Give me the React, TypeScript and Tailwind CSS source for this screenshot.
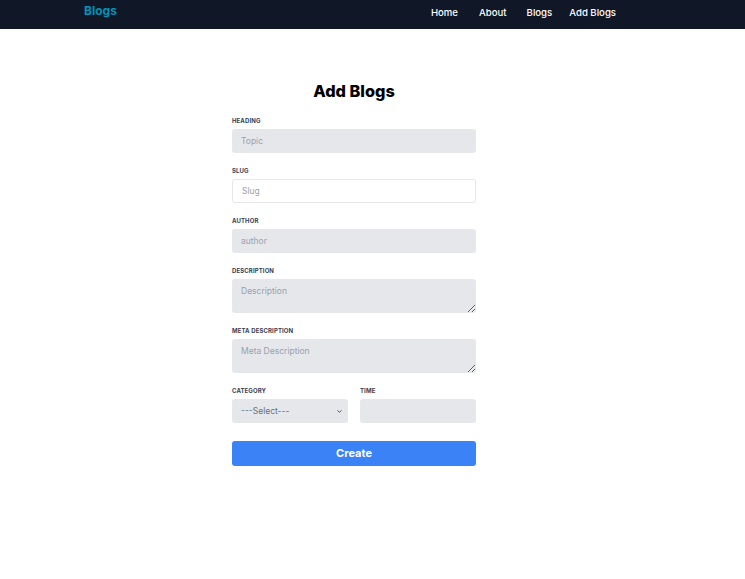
import { ChevronDown } from 'lucide-react'

const navLinks = [
  { label: 'Home', cls: 'ml-0' },
  { label: 'About', cls: 'ml-[21px]' },
  { label: 'Blogs', cls: 'ml-[20px]' },
  { label: 'Add Blogs', cls: 'ml-[17px]' },
]

const Label = ({ children }: { children: string }) => (
  <label className="block pt-[1px] text-[6px] leading-[8px] font-bold uppercase tracking-[0.02em] text-gray-700 mb-[4px]">
    {children}
  </label>
)

const inputCls =
  'block w-full h-[24px] rounded-[3px] bg-gray-200 px-[9px] text-[8.5px] text-gray-700 placeholder:text-gray-400 outline-none'

export default function App() {
  return (
    <div className="min-h-screen bg-white" style={{ fontFamily: 'Inter, "Noto Sans", sans-serif' }}>
      <header className="h-[29px] bg-gray-900">
        <div className="flex w-full items-start pl-[84px] pr-[129px]">
          <a className="mt-[4.5px] text-[12px] font-bold text-cyan-600 leading-none">Blogs</a>
          <nav className="ml-auto mt-[7.5px] flex items-center text-[9.6px] font-medium text-white leading-none">
            {navLinks.map((l) => (
              <a key={l.label} className={l.cls}>
                {l.label}
              </a>
            ))}
          </nav>
        </div>
      </header>

      <main className="w-[244px] ml-[232px] pt-[51px]">
        <h1 className="text-center text-[16.3px] font-extrabold text-black leading-[22px] mb-[14px]">Add Blogs</h1>

        <div className="mb-[13px]">
          <Label>Heading</Label>
          <input className={inputCls} placeholder="Topic" />
        </div>

        <div className="mb-[13px]">
          <Label>Slug</Label>
          <input
            className="block w-full h-[24px] rounded-[3px] bg-white border border-gray-200 px-[9px] text-[8.5px] text-gray-700 placeholder:text-gray-400 outline-none"
            placeholder="Slug"
          />
        </div>

        <div className="mb-[13px]">
          <Label>Author</Label>
          <input className={inputCls} placeholder="author" />
        </div>

        <div className="mb-[13px]">
          <Label>Description</Label>
          <textarea
            className="block w-full h-[34px] rounded-[3px] bg-gray-200 px-[9px] py-[7px] text-[8.5px] leading-[10px] text-gray-700 placeholder:text-gray-400 outline-none"
            placeholder="Description"
          />
        </div>

        <div className="mb-[13px]">
          <Label>Meta Description</Label>
          <textarea
            className="block w-full h-[34px] rounded-[3px] bg-gray-200 px-[9px] py-[7px] text-[8.5px] leading-[10px] text-gray-700 placeholder:text-gray-400 outline-none"
            placeholder="Meta Description"
          />
        </div>

        <div className="grid grid-cols-2 gap-x-[12px] mb-[18px]">
          <div>
            <Label>Category</Label>
            <div className="relative">
              <select className="block w-full h-[24px] appearance-none rounded-[3px] bg-gray-200 px-[9px] text-[8.5px] text-gray-500 outline-none">
                <option>---Select---</option>
              </select>
              <ChevronDown
                className="pointer-events-none absolute right-[5px] top-[9px] h-[7px] w-[7px] text-gray-700"
                strokeWidth={3}
              />
            </div>
          </div>
          <div>
            <Label>Time</Label>
            <input className={inputCls} />
          </div>
        </div>

        <button className="block w-full h-[25px] rounded-[3px] bg-[#3b82f6] text-white text-[11px] font-bold">
          Create
        </button>
      </main>
    </div>
  )
}
